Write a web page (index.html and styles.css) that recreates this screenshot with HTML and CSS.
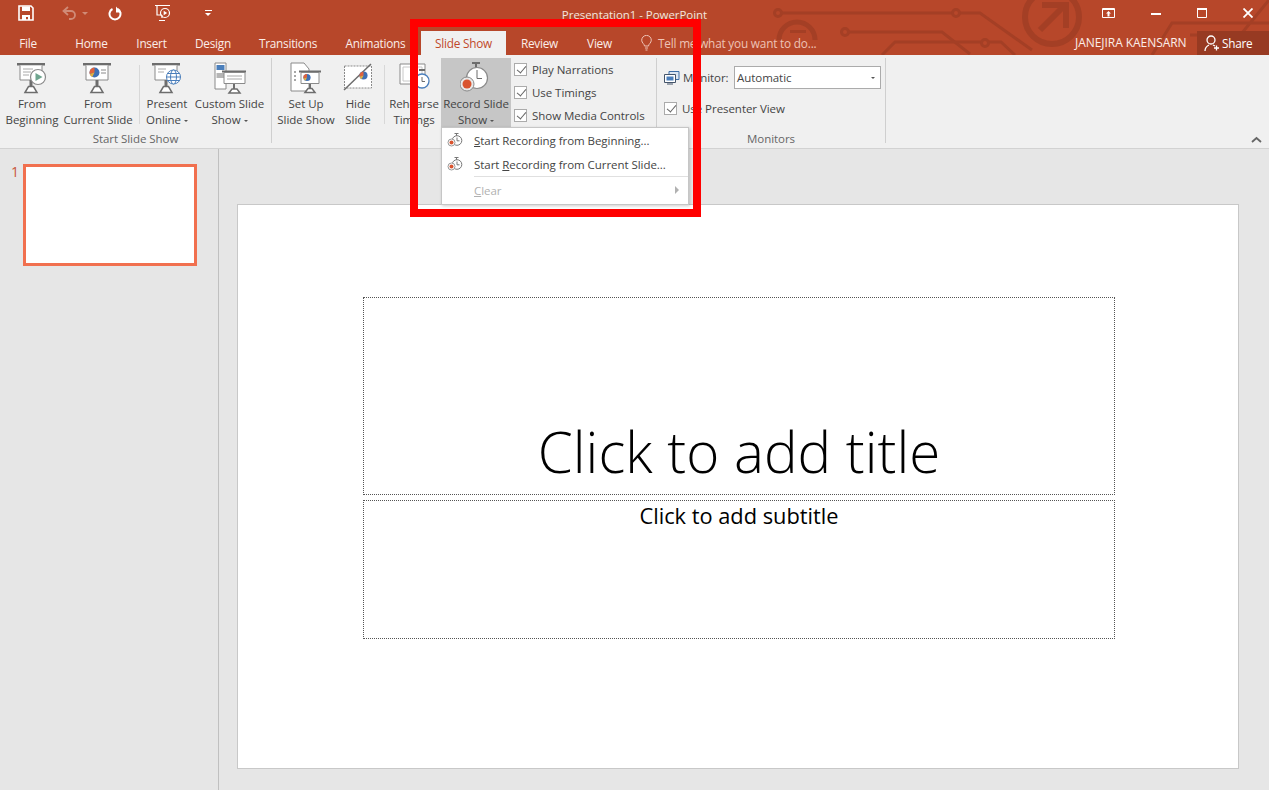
FILE: index.html
```html
<!DOCTYPE html>
<html lang="en">
<head>
    <meta charset="UTF-8">
    <meta name="viewport" content="width=device-width, initial-scale=1.0">
    <title>Presentation1 - PowerPoint</title>
    <link rel="stylesheet" href="styles.css">
</head>
<body>
    <svg class="defs" width="0" height="0">
        <symbol id="board" viewBox="0 0 32 32">
            <path d="M1 1h28v2.500h-28z" fill="#6d6d6d"/>
            <path d="M4 3.500v14.500h22v-14.500" fill="#fff" stroke="#8a8a8a"/>
            <path d="M15 18v6" stroke="#6d6d6d" stroke-width="3"/>
            <path d="M9 30.500l3.500-6h5l3.500 6z" fill="#fff" stroke="#6d6d6d" stroke-width="1.500"/>
        </symbol>
        <symbol id="pie" viewBox="0 0 10 10">
            <circle cx="5" cy="5" r="4.500" fill="#3f70b5"/>
            <path d="M5 5v-4.500a4.500 4.500 0 0 0 -4.300 5.800z" fill="#e0633c"/>
            <path d="M5 5l-4.300 1.300a4.500 4.500 0 0 0 2.300 2.700z" fill="#e5b23e"/>
        </symbol>
        <symbol id="timer" viewBox="0 0 16 18">
            <path d="M7.500 2.500h4M9.500 2.500v2.500" stroke="#777" fill="none"/>
            <circle cx="10" cy="9.500" r="4.800" fill="#fff" stroke="#777"/>
            <path d="M10 6.500v3.300h2.500" stroke="#777" fill="none"/>
            <circle cx="4.500" cy="11.500" r="3.500" fill="#fff" stroke="#999"/>
            <circle cx="4.500" cy="11.500" r="2" fill="#d9542f"/>
        </symbol>
    </svg>

    <header class="titlebar">
        <svg class="circuit" width="589" height="55" viewBox="680 0 589 55">
            <g fill="none" stroke="#a43f25" stroke-width="3">
                <circle cx="778" cy="13" r="3.500"/>
                <path d="M782 13h170M960 13h20l52 37"/>
                <circle cx="956" cy="13" r="3.500"/>
                <path d="M779 40a18 18 0 0 1 36 0" stroke-width="5"/>
                <path d="M790 31.500h16"/>
                <circle cx="845" cy="32" r="3.500"/>
                <path d="M849 32h93l28 22"/>
                <path d="M882 55l13-13h86M989 42h12l14 13"/>
                <circle cx="985" cy="43" r="3.500"/>
                <circle cx="1052" cy="17" r="27" stroke-width="6"/>
                <path d="M1040 30l26-26M1042 5h24v23" stroke-width="6"/>
                <path d="M1152 55l20-32h97M1224 55l45-55M1190 35h79" />
            </g>
        </svg>

        <div class="top-row">
            <div class="quick">
                <svg class="q-save" width="16" height="16" viewBox="0 0 16 16"><path d="M1 1h12l2 2v12h-14z" fill="none" stroke="#fff" stroke-width="1.600"/><path d="M4 1.500h8v4.500h-8zM4 10h8v5h-2v-3h-2v3h-4z" fill="#fff"/></svg>
                <svg class="q-undo" width="15" height="14" viewBox="0 0 15 14"><path d="M6 1l-4.500 4 4.500 4M2 5h7a4 4 0 0 1 0 8h-2" fill="none" stroke="#d08b77" stroke-width="1.800"/></svg>
                <span class="q-caret q-dim"></span>
                <svg class="q-redo" width="14" height="15" viewBox="0 0 14 15"><path d="M4.500 3a5.500 5.500 0 1 0 5 0" fill="none" stroke="#fff" stroke-width="2"/><path d="M8 0.500v6h5.500z" fill="#fff"/></svg>
                <svg class="q-show" width="18" height="18" viewBox="0 0 18 18"><path d="M1 1.500h15M3 2v9h5M8 11v3M5 16.500h6" fill="none" stroke="#fff" stroke-width="1.200"/><circle cx="11" cy="9" r="4.500" fill="none" stroke="#fff" stroke-width="1.200"/><path d="M9.700 6.700l3.500 2.300-3.500 2.300z" fill="#fff"/></svg>
                <span class="q-more"></span>
            </div>
            <div class="doc-title">Presentation1 - PowerPoint</div>
            <div class="win-btns">
                <svg width="13" height="10" viewBox="0 0 13 10"><path d="M.5.500h12v9h-12z" fill="none" stroke="#fff"/><path d="M1 1h11v1h-11zM6.500 3l-2.500 2.500h1.500v3h2v-3h1.500z" fill="#fff"/></svg>
                <svg width="10" height="10" viewBox="0 0 10 10"><path d="M0 5h10v2h-10z" fill="#fff"/></svg>
                <svg width="10" height="10" viewBox="0 0 10 10"><path d="M.5.500h9v9h-9z" fill="none" stroke="#fff"/><path d="M0 0h10v2h-10z" fill="#fff"/></svg>
                <svg width="10" height="10" viewBox="0 0 10 10"><path d="M.5.500l9 9M9.500.500l-9 9" stroke="#fff" stroke-width="1.800"/></svg>
            </div>
        </div>

        <nav class="tabs">
            <a class="tab tab-file">File</a>
            <a class="tab tab-home">Home</a>
            <a class="tab tab-insert">Insert</a>
            <a class="tab tab-design">Design</a>
            <a class="tab tab-trans">Transitions</a>
            <a class="tab tab-anim">Animations</a>
            <a class="tab tab-show active">Slide Show</a>
            <a class="tab tab-review">Review</a>
            <a class="tab tab-view">View</a>
            <div class="tell">
                <svg width="11" height="16" viewBox="0 0 11 16"><path d="M3.500 11c0-2-2.800-3-2.800-5.800a4.800 4.800 0 0 1 9.600 0c0 2.800-2.800 3.800-2.800 5.800zM4 13h3M4.500 15h2" fill="none" stroke="#eec3b6"/></svg>
                <span>Tell me what you want to do...</span>
            </div>
            <div class="user">JANEJIRA KAENSARN</div>
            <div class="share">
                <svg width="16" height="17" viewBox="0 0 16 17"><circle cx="7" cy="5" r="4" fill="none" stroke="#fff" stroke-width="1.300"/><path d="M1 16c0-3 2-5 4-6M9 10l2 1M12.500 10.500v5M10 13h5" fill="none" stroke="#fff" stroke-width="1.300"/></svg>
                <span>Share</span>
            </div>
        </nav>
    </header>

    <section class="ribbon">
        <div class="group group-start">
            <div class="group-body">
                <div class="rb rb-from">
                    <svg class="rb-icon" width="32" height="32"><use href="#board"/><path d="M7 7h10M7 10h8M7 13h6" stroke="#aaa"/><circle cx="22" cy="15" r="7.500" fill="#fff" stroke="#8a8a8a" stroke-width="1.200"/><path d="M19.500 11l7 4-7 4z" fill="#6fa58f"/></svg>
                    <span>From<br>Beginning</span>
                </div>
                <div class="rb rb-current">
                    <svg class="rb-icon" width="32" height="32"><use href="#board"/><use href="#pie" x="7" y="5" width="11" height="11"/><path d="M19 8h5M19 11h5" stroke="#8a8a8a"/></svg>
                    <span>From<br>Current Slide</span>
                </div>
                <div class="rb-sep"></div>
                <div class="rb rb-online">
                    <svg class="rb-icon" width="32" height="32"><use href="#board"/><path d="M7 7h8M7 10h6" stroke="#aaa"/><g fill="#fff" stroke="#4a7ebb"><circle cx="22.500" cy="15" r="7"/><ellipse cx="22.500" cy="15" rx="3" ry="7"/><path d="M15.500 15h14M16.500 11.500h12M16.500 18.500h12"/></g></svg>
                    <span>Present<br>Online<i class="caret"></i></span>
                </div>
                <div class="rb rb-custom">
                    <svg class="rb-icon" width="32" height="32"><path d="M1 1h11v26h-11z" fill="#fff" stroke="#8a8a8a"/><path d="M2.500 3h8v5h-8z" fill="#4a7ebb"/><path d="M2.500 11h8v5h-8z" fill="#b5b5b5"/><path d="M8 8.500h25v2h-25z" fill="#6d6d6d"/><path d="M10 10.500h21v11h-21z" fill="#fff" stroke="#8a8a8a"/><path d="M13 14h15M13 17h15" stroke="#aaa"/><path d="M20 22v5" stroke="#6d6d6d" stroke-width="2"/><path d="M15 31l3-4h5l3 4z" fill="#fff" stroke="#6d6d6d" stroke-width="1.500"/></svg>
                    <span>Custom Slide<br>Show<i class="caret"></i></span>
                </div>
            </div>
            <div class="group-label">Start Slide Show</div>
        </div>

        <div class="group group-setup">
            <div class="group-body">
                <div class="rb rb-setup">
                    <svg class="rb-icon" width="32" height="32"><path d="M1 1h13l5 6v22h-18z" fill="#fff" stroke="#8a8a8a"/><path d="M4 10h2M4 14h2M4 18h2" stroke="#8a8a8a" stroke-width="1.500"/><path d="M9 8.500h22v2h-22z" fill="#6d6d6d"/><path d="M11 10.500h18v11h-18z" fill="#fff" stroke="#8a8a8a"/><use href="#pie" x="13" y="11.500" width="8" height="8"/><path d="M20 22v4" stroke="#6d6d6d" stroke-width="2"/><path d="M15 30.500l3-4h4l3 4z" fill="#fff" stroke="#6d6d6d" stroke-width="1.500"/></svg>
                    <span>Set Up<br>Slide Show</span>
                </div>
                <div class="rb rb-hide">
                    <svg class="rb-icon" width="32" height="32"><path d="M2.500 4h27v22h-27z" fill="#fff" stroke="#8a8a8a" stroke-dasharray="2 1"/><path d="M29 2l-27 26" stroke="#6d6d6d" stroke-width="1.500"/><use href="#pie" x="17" y="9" width="9" height="9"/></svg>
                    <span>Hide<br>Slide</span>
                </div>
                <div class="rb-sep"></div>
                <div class="rb rb-rehearse">
                    <svg class="rb-icon" width="32" height="32"><path d="M2 2h25v20h-25z" fill="#fff" stroke="#8a8a8a"/><path d="M5 5h19v14h-19z" fill="#fff" stroke="#c8c8c8"/><circle cx="24" cy="19" r="7" fill="#fff" stroke="#4a7ebb" stroke-width="1.300"/><path d="M24 15v4.500h3" stroke="#6d6d6d" fill="none"/><path d="M21 8h6" stroke="#6d6d6d" stroke-width="2"/></svg>
                    <span>Rehearse<br>Timings</span>
                </div>
                <div class="rb rb-record">
                    <svg class="rb-icon" width="32" height="32" viewBox="0 0 32 32"><path d="M12 1h8M16 1v5" stroke="#6d6d6d" stroke-width="2" fill="none"/><circle cx="17" cy="16" r="10.500" fill="#fff" stroke="#8a8a8a" stroke-width="1.200"/><path d="M17 8v8.500h5" stroke="#6d6d6d" fill="none"/><circle cx="7" cy="22" r="7" fill="#e8e8e8" stroke="#8a8a8a"/><circle cx="7" cy="22" r="4.500" fill="#d9542f"/></svg>
                    <span>Record Slide<br>Show<i class="caret"></i></span>
                </div>
                <div class="checks">
                    <label class="check"><i class="box"></i>Play Narrations</label>
                    <label class="check"><i class="box"></i>Use Timings</label>
                    <label class="check"><i class="box"></i>Show Media Controls</label>
                </div>
            </div>
        </div>

        <div class="group group-monitors">
            <div class="group-body mon-body">
                <div class="mon-row">
                    <svg width="16" height="14" viewBox="0 0 16 14"><path d="M5 .500h10v8h-10z" fill="#dce6f2" stroke="#3e6ea8"/><path d="M.5 3.500h11v8h-11z" fill="#fff" stroke="#44546a"/><path d="M2.500 5.500h7v4h-7z" fill="#4a7ebb"/><path d="M3 13h6" stroke="#44546a"/></svg>
                    <span class="mon-label">Monitor:</span>
                    <div class="select">Automatic<i class="caret"></i></div>
                </div>
                <label class="check check-mon"><i class="box"></i>Use Presenter View</label>
            </div>
            <div class="group-label">Monitors</div>
        </div>

        <svg class="collapse" width="11" height="7" viewBox="0 0 11 7"><path d="M1 6l4.500-4 4.500 4" fill="none" stroke="#666" stroke-width="1.800"/></svg>
    </section>

    <main class="workspace">
        <aside class="thumbs">
            <span class="thumb-num">1</span>
            <div class="thumb"></div>
        </aside>
        <div class="stage">
            <div class="slide">
                <div class="ph ph-title">Click to add title</div>
                <div class="ph ph-sub">Click to add subtitle</div>
            </div>
        </div>
    </main>

    <!-- dropdown + the red marker sit on top of everything -->
    <div class="menu">
        <div class="menu-item">
            <svg width="16" height="18"><use href="#timer"/></svg>
            <span><u>S</u>tart Recording from Beginning...</span>
        </div>
        <div class="menu-item">
            <svg width="16" height="18"><use href="#timer"/></svg>
            <span>Start <u>R</u>ecording from Current Slide...</span>
        </div>
        <div class="menu-sep"></div>
        <div class="menu-item disabled">
            <span><u>C</u>lear</span>
            <i class="arrow"></i>
        </div>
    </div>
    <div class="marker"></div>
</body>
</html>
```

FILE: styles.css
```css
* {
    box-sizing: border-box;
}
html, body {
    margin: 0;
    height: 100%;
}
body {
    position: relative;
    width: 1269px;
    height: 790px;
    overflow: hidden;
    background: #e6e6e6;
    font-family: "Open Sans", "Noto Sans", sans-serif;
    font-size: 11.5px;
    letter-spacing: -0.05px;
    color: #444;
}
.defs {
    position: absolute;
}

/* title bar */
.titlebar {
    position: relative;
    height: 55px;
    background: #b7472a;
    color: #fff;
}
.circuit {
    position: absolute;
    top: 0;
    right: 0;
}
.top-row {
    position: relative;
    display: flex;
    height: 31px;
}
.quick {
    display: flex;
    align-items: center;
    width: 220px;
    padding: 0 0 5px 18px;
}
.q-undo {
    margin-left: 28px;
}
.q-caret {
    margin-left: 5px;
    border: 3px solid transparent;
    border-top-color: #d08b77;
    margin-top: 3px;
}
.q-redo {
    margin-left: 20px;
}
.q-show {
    margin-left: 32px;
}
.q-more {
    margin-left: 33px;
    width: 7px;
    height: 7px;
    border-top: 1px solid #fff;
    position: relative;
}
.q-more::after {
    content: "";
    position: absolute;
    top: 2px;
    left: 0;
    border: 3.500px solid transparent;
    border-top-color: #fff;
}
.doc-title {
    width: 829px;
    padding: 7px 0 0 0;
    text-align: center;
    font-size: 11.5px;
    color: #f6e4de;
}
.win-btns {
    flex: 1;
    display: flex;
    align-items: center;
    padding: 0 16px 5px 0;
    justify-content: flex-end;
    gap: 36px;
}
.tabs {
    position: relative;
    display: flex;
    height: 24px;
}
.tab {
    display: flex;
    align-items: center;
    justify-content: center;
    height: 24px;
    font-size: 11.8px;
    letter-spacing: -0.25px;
    color: #fbeee9;
}
.tab-file { width: 56px; margin-right: 5px; }
.tab-home { width: 61px; }
.tab-insert { width: 59px; }
.tab-design { width: 64px; }
.tab-trans { width: 86px; }
.tab-anim { width: 89px; }
.tab-show { width: 85px; margin-left: 1px; }
.tab-review { width: 67px; }
.tab-view { width: 53px; }
.tab.active {
    background: #f0f0f0;
    color: #c0482a;
}
.tell {
    display: flex;
    align-items: center;
    gap: 6px;
    margin-left: 15px;
    width: 434px;
    color: #eec3b6;
    font-size: 11.8px;
    letter-spacing: -0.2px;
}
.user {
    width: 122px;
    line-height: 24px;
    font-size: 12px;
    color: #fbeee9;
}
.share {
    display: flex;
    align-items: center;
    gap: 2px;
    width: 72px;
    padding-left: 7px;
    background: #973a22;
    font-size: 11.8px;
    letter-spacing: -0.25px;
}

/* ribbon */
.ribbon {
    position: relative;
    display: flex;
    height: 94px;
    background: #f0f0f0;
    border-bottom: 1px solid #d2d2d2;
}
.group {
    display: flex;
    flex-direction: column;
    margin-top: 3px;
    height: 85px;
    border-right: 1px solid #cfcfcf;
}
.group-start { width: 272px; }
.group-setup { width: 385px; }
.group-monitors { width: 229px; }
.group-body {
    flex: none;
    display: flex;
    height: 73px;
}
.group-label {
    text-align: center;
    line-height: 16px;
    color: #666;
}
.rb {
    display: flex;
    flex-direction: column;
    align-items: center;
    height: 69px;
    text-align: center;
    line-height: 16px;
    white-space: nowrap;
}
.rb-icon {
    flex: none;
    margin: 4px 0 2px;
}
.rb-from { width: 64px; }
.rb-current { width: 68px; }
.rb-online { width: 52px; }
.rb-custom { width: 73px; }
.rb-setup { width: 66px; }
.rb-hide { width: 38px; }
.rb-rehearse { width: 54px; }
.rb-record {
    width: 70px;
    background: #c6c6c6;
}
.rb-sep {
    width: 1px;
    height: 59px;
    margin: 7px 7px 0;
    background: #d8d8d8;
}
.group-start .rb-sep { margin: 7px 1px 0 7px; }
.group-setup .rb-setup { margin-left: 1px; }
.group-setup .rb-sep { margin: 7px 2px 0 7px; }
.caret {
    display: inline-block;
    margin-left: 3px;
    vertical-align: 2px;
    border: 2.500px solid transparent;
    border-bottom-width: 0;
    border-top-color: #555;
}
.checks {
    display: flex;
    flex-direction: column;
    gap: 7px;
    padding: 3px 0 0 3px;
}
.check {
    display: flex;
    align-items: center;
    gap: 5px;
    height: 16px;
    white-space: nowrap;
}
.box {
    position: relative;
    flex: none;
    width: 13px;
    height: 13px;
    background: #fff;
    border: 1px solid #ababab;
}
.box::after {
    content: "";
    position: absolute;
    left: 3.500px;
    top: 0.500px;
    width: 4px;
    height: 8px;
    border: solid #666;
    border-width: 0 1.500px 1.500px 0;
    transform: rotate(40deg);
}
.mon-body {
    flex-direction: column;
    padding: 8px 0 0 7px;
}
.mon-row {
    display: flex;
    align-items: center;
    height: 23px;
}
.mon-label {
    margin-left: 3px;
    width: 51px;
}
.select {
    display: flex;
    align-items: center;
    justify-content: space-between;
    width: 147px;
    height: 23px;
    padding: 0 5px 0 2px;
    background: #fff;
    border: 1px solid #ababab;
}
.select .caret {
    vertical-align: 0;
}
.check-mon {
    margin-top: 11px;
}
.collapse {
    position: absolute;
    right: 7px;
    bottom: 5px;
}

/* thumbnails + slide */
.workspace {
    display: flex;
    height: 641px;
}
.thumbs {
    display: flex;
    width: 219px;
    padding: 15px 0 0 11px;
    border-right: 1px solid #c0c0c0;
}
.thumb-num {
    width: 12px;
    font-size: 14px;
    line-height: 16px;
    color: #c9563a;
}
.thumb {
    width: 174px;
    height: 102px;
    background: #fff;
    border: 3px solid #f1704f;
}
.stage {
    flex: 1;
    padding: 55px 30px 0 18px;
}
.slide {
    width: 1002px;
    height: 565px;
    padding: 92px 123px 0 125px;
    background: #fff;
    border: 1px solid #c8c8c8;
}
.ph {
    border: 1px dotted #555;
    text-align: center;
    color: #000;
    letter-spacing: 0;
}
.ph-title {
    display: flex;
    align-items: flex-end;
    justify-content: center;
    height: 198px;
    padding-bottom: 7px;
    font-size: 56.5px;
    font-weight: 300;
    line-height: 70px;
}
.ph-sub {
    height: 139px;
    margin-top: 5px;
    font-size: 21.8px;
    line-height: 30px;
}

/* dropdown */
.menu {
    position: absolute;
    left: 441px;
    top: 127px;
    width: 248px;
    height: 78px;
    background: #fff;
    border: 1px solid #c6c6c6;
    box-shadow: 1px 1px 3px rgba(0,0,0,0.2);
}
.menu-item {
    display: flex;
    align-items: center;
    height: 24px;
    padding-left: 5px;
    gap: 11px;
    white-space: nowrap;
}
.menu-sep {
    height: 1px;
    margin: 0 0 1px 32px;
    background: #e0e0e0;
}
.menu-item.disabled {
    position: relative;
    padding-left: 32px;
    color: #b1b1b1;
}
.arrow {
    position: absolute;
    right: 9px;
    top: 8px;
    border: 4px solid transparent;
    border-right-width: 0;
    border-left-color: #b1b1b1;
}

/* red highlight drawn over the screenshot */
.marker {
    position: absolute;
    left: 410px;
    top: 19px;
    width: 291px;
    height: 198px;
    border: 8px solid #f00;
}
```
